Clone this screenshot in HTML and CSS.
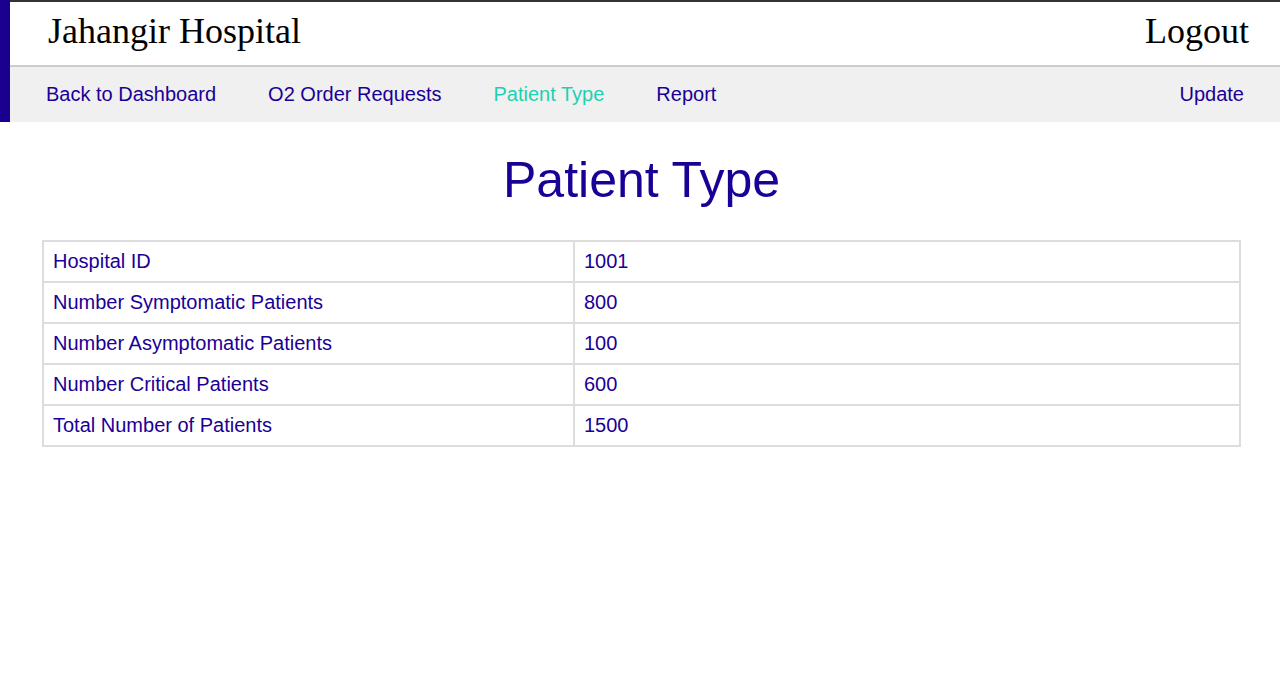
FILE: index.html
```html
<!DOCTYPE html>
<html>
<head>
<meta charset="utf-8">
<title>Patient Type</title>
<link rel="stylesheet" href="styles.css">
</head>
<body>
<div class="topbar">
  <header class="header">
    <div class="brand">Jahangir Hospital</div>
    <a class="logout" href="#">Logout</a>
  </header>
  <nav class="nav">
    <div class="nav-left">
      <a href="#" class="nav-link">Back to Dashboard</a>
      <a href="#" class="nav-link">O2 Order Requests</a>
      <a href="#" class="nav-link active">Patient Type</a>
      <a href="#" class="nav-link">Report</a>
    </div>
    <a href="#" class="nav-link">Update</a>
  </nav>
</div>
<main class="main">
  <h1 class="title">Patient Type</h1>
  <table class="info">
    <tbody>
      <tr><td class="label">Hospital ID</td><td>1001</td></tr>
      <tr><td class="label">Number Symptomatic Patients</td><td>800</td></tr>
      <tr><td class="label">Number Asymptomatic Patients</td><td>100</td></tr>
      <tr><td class="label">Number Critical Patients</td><td>600</td></tr>
      <tr><td class="label">Total Number of Patients</td><td>1500</td></tr>
    </tbody>
  </table>
</main>
</body>
</html>
```

FILE: styles.css
```css
* { box-sizing: border-box; }
html, body {
  margin: 0;
  padding: 0;
  background: #fff;
  font-family: "Liberation Sans", Arial, sans-serif;
}
a { text-decoration: none; }

.topbar {
  border-left: 10px solid #1b0090;
}
.header {
  height: 67px;
  border-top: 2px solid #333;
  border-bottom: 2px solid #cccccc;
  display: flex;
  justify-content: space-between;
  align-items: flex-start;
  padding: 9px 31px 0 38px;
  background: #fff;
}
.brand, .logout {
  font-family: "Liberation Serif", "Times New Roman", serif;
  font-size: 36px;
  line-height: 40px;
  color: #000;
}
.nav {
  height: 55px;
  background: #f0f0f0;
  display: flex;
  justify-content: space-between;
  align-items: flex-start;
  padding: 16px 36px 0 36px;
}
.nav-left {
  display: flex;
  gap: 52px;
}
.nav-link {
  font-size: 20px;
  line-height: 23px;
  color: #1b0096;
}
.nav-link.active { color: #1dd0b0; }

.main {
  padding: 0 39px 0 42px;
}
.title {
  margin: 29px 0 31px;
  text-align: center;
  font-weight: normal;
  font-size: 50px;
  line-height: 58px;
  color: #1b0096;
}
.info {
  width: 100%;
  border-collapse: collapse;
  border: 2px solid #dddddd;
}
.info td {
  border: 2px solid #dddddd;
  font-size: 20px;
  line-height: 23px;
  color: #1b0096;
  padding: 8px 8px 8px 9px;
}
.info td.label { width: 531px; }
```
